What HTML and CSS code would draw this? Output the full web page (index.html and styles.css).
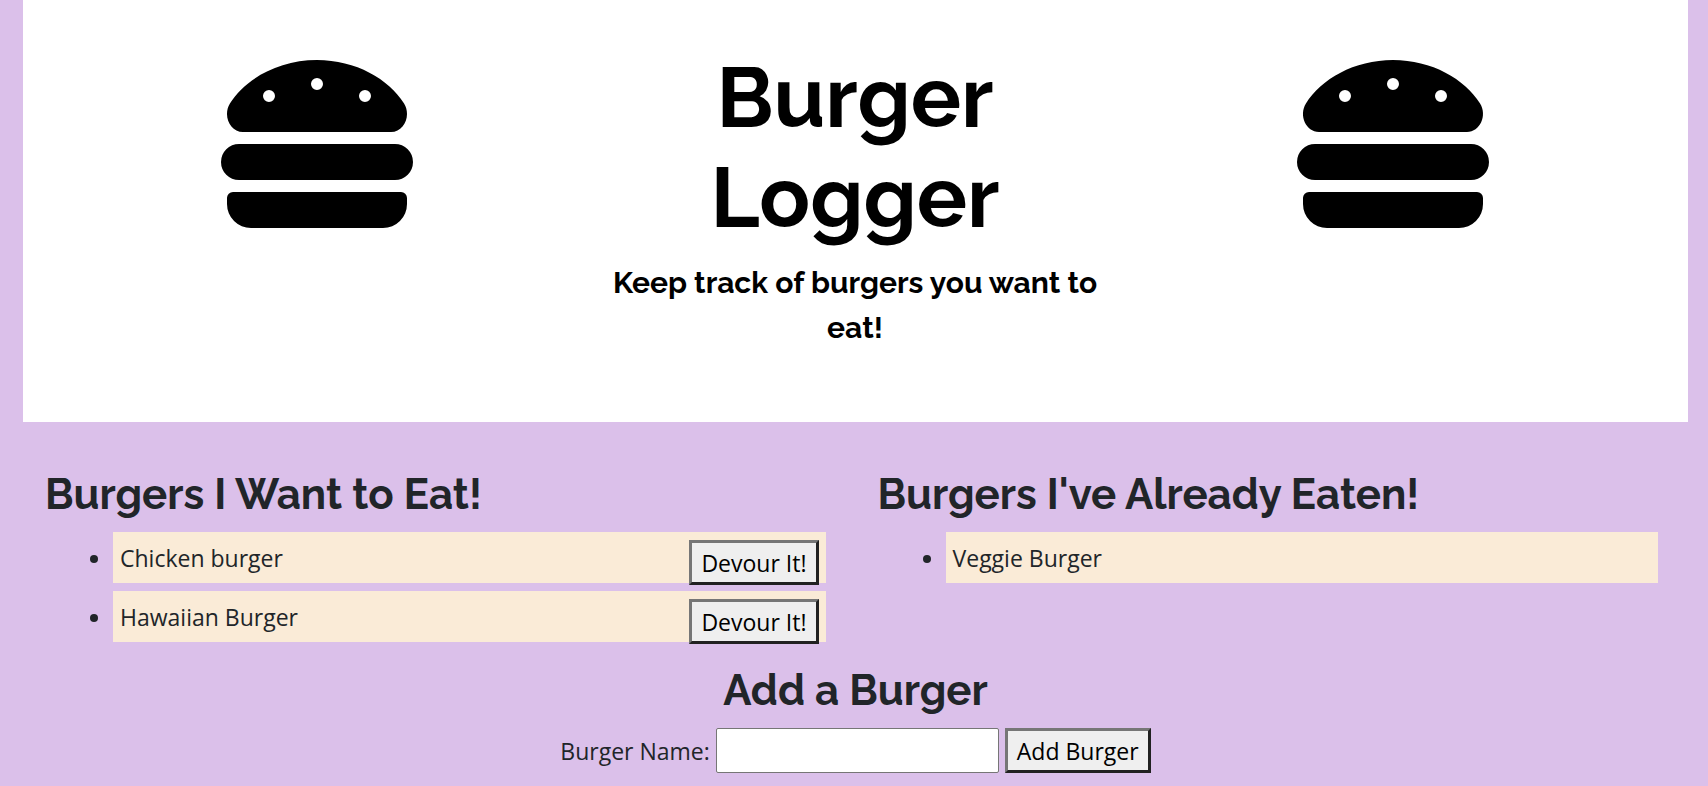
FILE: index.html
```html
<!DOCTYPE html>
<html lang="en">
<head>
<meta charset="utf-8">
<meta name="viewport" content="width=device-width, initial-scale=1">
<title>Burger Logger</title>
<link rel="stylesheet" href="styles.css">
</head>
<body>
<svg class="sprite" aria-hidden="true">
  <symbol id="burger" viewBox="0 0 512 512">
    <path d="M464 256H48a48 48 0 0 0 0 96h416a48 48 0 0 0 0-96zm16 128H32a16 16 0 0 0-16 16v16a64 64 0 0 0 64 64h352a64 64 0 0 0 64-64v-16a16 16 0 0 0-16-16zM58.64 224h394.72c34.57 0 54.62-43.9 34.82-75.88C448 83.2 359.55 32.1 256 32c-103.54.1-192 51.2-232.18 116.11C4 180.09 24.07 224 58.64 224zM384 112a16 16 0 1 1-16 16 16 16 0 0 1 16-16zM256 80a16 16 0 1 1-16 16 16 16 0 0 1 16-16zm-128 32a16 16 0 1 1-16 16 16 16 0 0 1 16-16z"/>
  </symbol>
</svg>
<div class="page">
  <header class="hero">
    <div class="hero-col"><svg class="burger" aria-hidden="true"><use href="#burger"/></svg></div>
    <div class="hero-col">
      <h1 class="title">Burger Logger</h1>
      <p class="tagline">Keep track of burgers you want to eat!</p>
    </div>
    <div class="hero-col"><svg class="burger" aria-hidden="true"><use href="#burger"/></svg></div>
  </header>
  <main>
    <div class="lists">
      <section class="list-col">
        <h2 class="heading">Burgers I Want to Eat!</h2>
        <ul class="burgers">
          <li class="item">Chicken burger <button class="btn devour" type="button">Devour It!</button></li>
          <li class="item">Hawaiian Burger <button class="btn devour" type="button">Devour It!</button></li>
        </ul>
      </section>
      <section class="list-col">
        <h2 class="heading">Burgers I've Already Eaten!</h2>
        <ul class="burgers">
          <li class="item">Veggie Burger</li>
        </ul>
      </section>
    </div>
    <section class="add">
      <h2 class="heading">Add a Burger</h2>
      <form class="add-form">
        <label class="label" for="burger-name">Burger Name:</label>
        <input class="field" type="text" id="burger-name" name="name">
        <button class="btn" type="submit">Add Burger</button>
      </form>
    </section>
  </main>
</div>
</body>
</html>
```
FILE: styles.css
```css
* {
  box-sizing: border-box;
}

body {
  margin: 0;
  background: #dbc0ea;
  color: #212529;
  font-family: "Segoe UI", "Open Sans", "Noto Sans", sans-serif;
  font-size: 23px;
  line-height: 37px;
}

.sprite {
  display: none;
}

.page {
  padding: 0 20px 13px 23px;
}

.hero {
  display: grid;
  grid-template-columns: repeat(3, 1fr);
  padding: 48px 26px 72px 25px;
  background: #fff;
  color: #000;
  text-align: center;
}

.hero-col {
  padding: 0 22px;
}

.burger {
  display: block;
  width: 192px;
  height: 192px;
  margin: 0 auto;
}

.title,
.tagline,
.heading {
  font-family: Raleway, Lato, sans-serif;
  font-weight: 700;
}

.title {
  max-width: 400px;
  margin: 0 auto 12px;
  font-size: 84px;
  line-height: 100px;
}

.tagline {
  margin: 0;
  font-size: 30px;
  line-height: 45px;
}

.lists {
  display: grid;
  grid-template-columns: 1fr 1fr;
  padding-top: 48px;
}

.list-col {
  padding: 0 22px;
}

.heading {
  margin: 0 0 12px;
  font-size: 42px;
  line-height: 50px;
}

.burgers {
  margin: 0 0 24px;
  padding-left: 60px;
}

.item {
  margin: 8px;
  padding: 8px 7px 6px;
  background: #faebd7;
}

.btn {
  height: 45px;
  padding: 2px 9px 0;
  border: 3px solid;
  border-color: #767676 #212121 #212121 #767676;
  border-radius: 0;
  background: #efefef;
  color: #000;
  font: inherit;
}

.devour {
  float: right;
}

.add {
  text-align: center;
}

.add-form {
  display: flex;
  flex-wrap: wrap;
  justify-content: center;
  align-items: center;
  gap: 6px;
}

.label {
  padding-top: 2px;
}

.field {
  width: 283px;
  height: 45px;
  padding: 2px 4px;
  border: 1px solid #767676;
  border-radius: 2px;
  background: #fff;
  font: inherit;
}
```
